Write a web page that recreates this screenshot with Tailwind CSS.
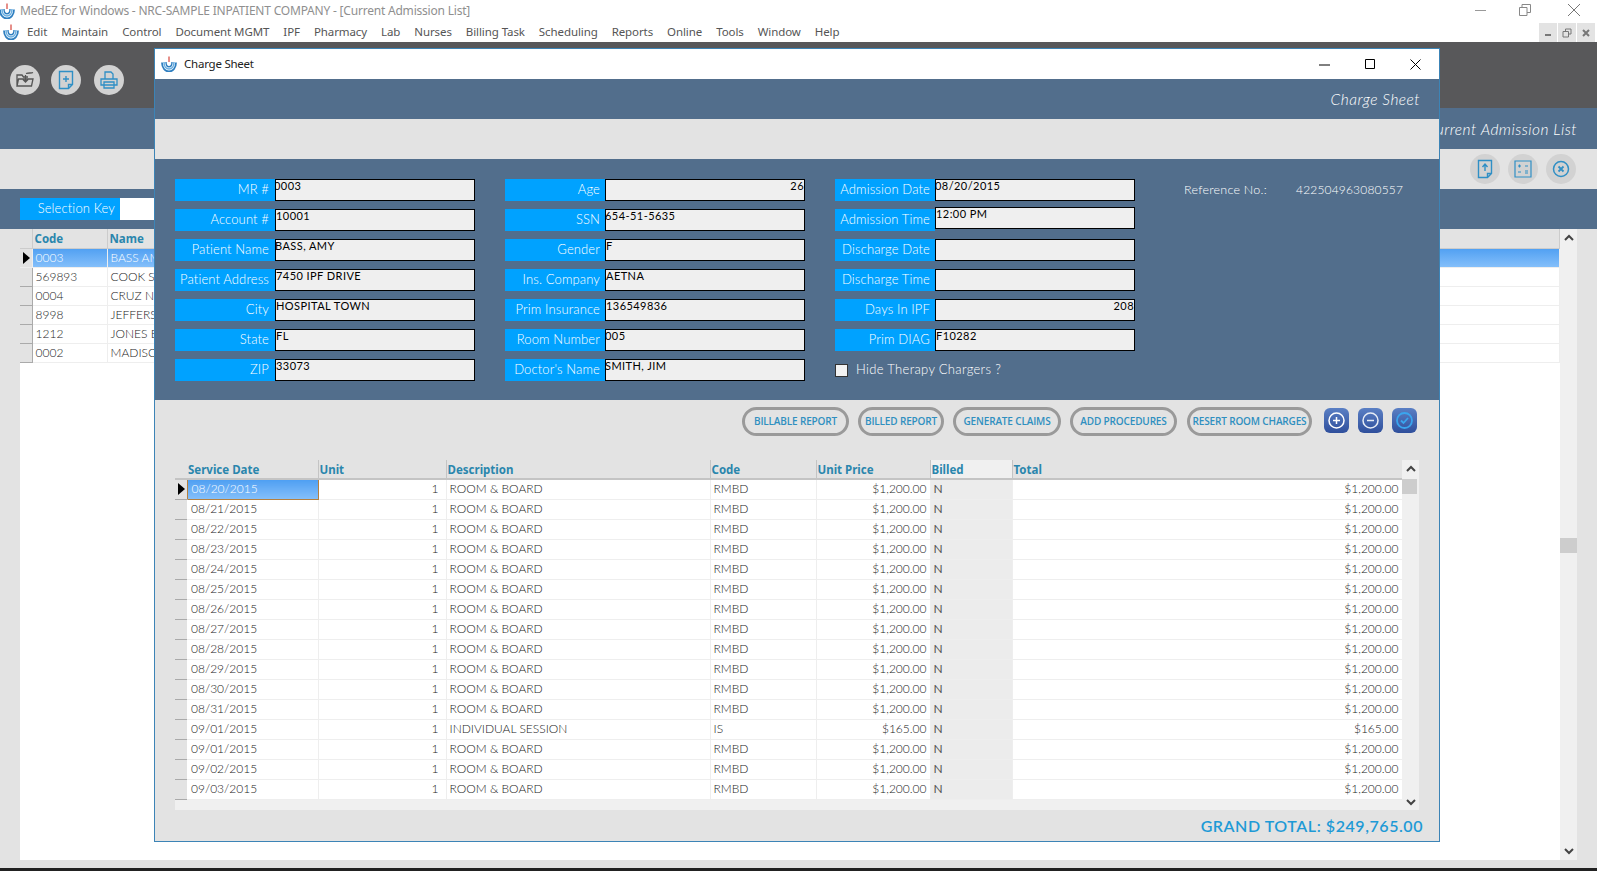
<!DOCTYPE html>
<html>
<head>
<meta charset="utf-8">
<script src="https://cdn.jsdelivr.net/npm/@tailwindcss/browser@4"></script>
<title>MedEZ Charge Sheet</title>
</head>
<body class="m-0 overflow-hidden">
<svg width="0" height="0" class="absolute">
  <defs>
    <symbol id="logo" viewBox="0 0 16 16">
      <path d="M1 6.500C1 12 4 15.500 8 15.500s7-3.500 7-9" fill="none" stroke="#2f7fc0" stroke-width="1.800"/>
      <path d="M3 6C3 10.500 5.300 13 8 13s5-2.500 5-7" fill="none" stroke="#6bb0e2" stroke-width="1.600"/>
      <path d="M5 6C5 9 6.300 10.800 8 10.800S11 9 11 6" fill="none" stroke="#2f7fc0" stroke-width="1.400"/>
      <path d="M8 .5v5.500" fill="none" stroke="#d9534a" stroke-width="1.300"/>
    </symbol>
    <symbol id="rowarrow" viewBox="0 0 7 12"><path d="M0 0l7 6-7 6z" fill="#000"/></symbol>
  </defs>
</svg>
<div class="relative w-[1597px] h-[871px] overflow-hidden bg-[#e3e3e3] font-['Lato',sans-serif] flex flex-col">
  <!-- window title bar -->
  <div class="h-[21px] bg-white flex items-center shrink-0 relative">
    <svg class="w-[16px] h-[16px] ml-[-1px] mr-[5px]"><use href="#logo"/></svg>
    <span class="font-['Noto_Sans',sans-serif] text-[12px] text-[#8f8f8f] tracking-[-0.017em] whitespace-nowrap">MedEZ for Windows - NRC-SAMPLE INPATIENT COMPANY - [Current Admission List]</span>
    <div class="ml-auto flex items-center mr-[16px] -mt-[2px] gap-[32px] text-[#8a8a8a]">
      <svg width="12" height="12" viewBox="0 0 12 12"><path d="M0 6.500h11" stroke="#999" fill="none"/></svg>
      <svg width="12" height="12" viewBox="0 0 12 12"><path d="M.5 3.500h7.500v8H.5zM3 3.500V.5h8.500v8H8" stroke="#888" fill="none"/></svg>
      <svg class="ml-[4px]" width="14" height="14" viewBox="0 0 14 14"><path d="M1 1l12 12M13 1L1 13" stroke="#777" fill="none"/></svg>
    </div>
  </div>
  <!-- menu -->
  <div class="h-[21px] bg-white flex items-center shrink-0 font-['Noto_Sans',sans-serif] text-[11.500px] tracking-[-0.008em] text-[#555] whitespace-nowrap">
    <svg class="w-[16px] h-[16px] ml-[3px] mr-[8px]"><use href="#logo"/></svg>
    <div class="flex gap-[14px]">
      <span>Edit</span><span>Maintain</span><span>Control</span><span>Document MGMT</span><span>IPF</span><span>Pharmacy</span><span>Lab</span><span>Nurses</span><span>Billing Task</span><span>Scheduling</span><span>Reports</span><span>Online</span><span>Tools</span><span>Window</span><span>Help</span>
    </div>
    <div class="ml-auto flex h-[19px] mt-[2px] mr-[2px] gap-[1px]">
      <span class="w-[18px] bg-[#e3e3e3] flex items-center justify-center"><svg width="8" height="8" viewBox="0 0 8 8"><path d="M1 6h6" stroke="#777" stroke-width="2" fill="none"/></svg></span>
      <span class="w-[18px] bg-[#e3e3e3] flex items-center justify-center"><svg width="10" height="10" viewBox="0 0 10 10"><path d="M1 3.500h5.500v5.500H1zM3.500 3.500V1H9v5H6.500" stroke="#777" fill="none"/></svg></span>
      <span class="w-[18px] bg-[#e3e3e3] flex items-center justify-center"><svg width="10" height="10" viewBox="0 0 10 10"><path d="M2 2l6 6M8 2L2 8" stroke="#777" stroke-width="2" fill="none"/></svg></span>
    </div>
  </div>
  <!-- toolbar -->
  <div class="h-[66px] bg-[#58585a] flex items-center shrink-0 pl-[10px] pt-[10px] gap-[11px]">
    <span class="w-[30px] h-[30px] rounded-full bg-[#d2d2d2] flex items-center justify-center">
      <svg width="20" height="18" viewBox="0 0 20 18" fill="none" stroke="#555" stroke-width="1.300"><path d="M2 15V4h5l1.500 2H13M2 15l1.500-7H18l-1.500 7zM11 2.500c3-1 5 0 7-1M10.500 4v7m-2.500-2.500 2.500 2.500 2.500-2.500"/></svg>
    </span>
    <span class="w-[30px] h-[30px] rounded-full bg-[#d2d2d2] flex items-center justify-center">
      <svg width="16" height="20" viewBox="0 0 16 20" fill="none" stroke="#2f8fc5" stroke-width="1.400"><path d="M1.500 1.500h13v13l-4 4h-9zM14.500 14.500h-4v4M8 6v6M5 9h6"/></svg>
    </span>
    <span class="w-[30px] h-[30px] rounded-full bg-[#d2d2d2] flex items-center justify-center ml-[2px]">
      <svg width="20" height="20" viewBox="0 0 20 20" fill="none" stroke="#2f8fc5" stroke-width="1.300"><path d="M6 9V2h6l2 2v5M2 9h16v6H2zM5 12h10v6H5z"/></svg>
    </span>
  </div>
  <!-- header strip -->
  <div class="h-[41px] bg-[#526e8c] shrink-0 flex items-center justify-end pr-[20px] pt-[2px]">
    <span class="text-white text-[15.500px] italic font-light tracking-[0.03em]">Current Admission List</span>
  </div>
  <!-- grey strip -->
  <div class="h-[40px] bg-[#e3e3e3] shrink-0 flex items-center justify-end pr-[21px] gap-[8px]">
    <span class="w-[30px] h-[30px] rounded-full bg-[#d2d2d2] flex items-center justify-center">
      <svg width="16" height="20" viewBox="0 0 16 20" fill="none" stroke="#2f8fc5" stroke-width="1.400"><path d="M1.500 1.500h13v13l-4 4h-9zM14.500 14.500h-4v4M8 12V5M5.500 8 8 5l2.500 3"/></svg>
    </span>
    <span class="w-[30px] h-[30px] rounded-full bg-[#d2d2d2] flex items-center justify-center">
      <svg width="18" height="18" viewBox="0 0 18 18" fill="none" stroke="#2f8fc5" stroke-width="1.200"><path d="M1 1h16v16H1zM4 6h3M5.500 4.500v3M11 6h3M4 12h3M11 11h3M11 13h3"/></svg>
    </span>
    <span class="w-[30px] h-[30px] rounded-full bg-[#d2d2d2] flex items-center justify-center">
      <svg width="18" height="18" viewBox="0 0 18 18" fill="none" stroke="#2f8fc5" stroke-width="1.500"><circle cx="9" cy="9" r="7.500"/><path d="M6.500 6.500l5 5M11.500 6.500l-5 5" stroke-width="1.800"/></svg>
    </span>
  </div>
  <!-- selection key -->
  <div class="h-[40px] bg-[#526e8c] shrink-0 flex items-center pl-[20px]">
    <span class="w-[100px] h-[22px] bg-[#00a2ff] text-white text-[13px] font-light flex items-center justify-end pr-[5px] tracking-[0.01em]">Selection Key</span>
    <span class="w-[300px] h-[22px] bg-white"></span>
  </div>
  <!-- admission list -->
  <div class="h-[631px] shrink-0 flex pl-[20px]">
    <div class="w-[1540px] bg-white">
      <table class="table-fixed w-[1540px] border-collapse text-[12px] font-light text-[#222] [&_td]:h-[19px] [&_td]:p-0 [&_td]:pl-[3px] [&_td]:border-b [&_td]:border-r [&_td]:border-[#eeeeee]">
        <colgroup><col class="w-[12px]"><col class="w-[75px]"><col class="w-[200px]"><col></colgroup>
        <tbody>
          <tr class="bg-[#e3e3e3] text-[#2a86ad] font-['Noto_Sans',sans-serif] font-bold text-[11.500px]">
            <td class="!border-[#cccccc]"></td><td class="!border-[#cccccc] !pl-[2px]">Code</td><td class="!border-[#cccccc] !pl-[2px]">Name</td><td class="!border-[#cccccc]"></td>
          </tr>
          <tr class="text-white bg-[linear-gradient(#4f9ff2,#84bffa)]"><td class="!pl-0 bg-[#e3e3e3]"><svg class="w-[7px] h-[12px] ml-[3px]"><use href="#rowarrow"/></svg></td><td>0003</td><td>BASS AMY</td><td></td></tr>
          <tr><td class="bg-[#e3e3e3] !border-[#aaaaaa]"></td><td>569893</td><td>COOK S</td><td></td></tr>
          <tr><td class="bg-[#e3e3e3] !border-[#aaaaaa]"></td><td>0004</td><td>CRUZ N</td><td></td></tr>
          <tr><td class="bg-[#e3e3e3] !border-[#aaaaaa]"></td><td>8998</td><td>JEFFERS</td><td></td></tr>
          <tr><td class="bg-[#e3e3e3] !border-[#aaaaaa]"></td><td>1212</td><td>JONES E</td><td></td></tr>
          <tr><td class="bg-[#e3e3e3] !border-[#aaaaaa]"></td><td>0002</td><td>MADISC</td><td></td></tr>
        </tbody>
      </table>
    </div>
    <div class="w-[17px] bg-[#f0f0f0] flex flex-col items-center justify-between py-[5px] relative">
      <svg width="10" height="8" viewBox="0 0 10 8"><path d="M1 6l4-4 4 4" fill="none" stroke="#444" stroke-width="2"/></svg>
      <span class="absolute top-[309px] left-0 w-[17px] h-[15px] bg-[#cdcdcd]"></span>
      <svg width="10" height="8" viewBox="0 0 10 8"><path d="M1 2l4 4 4-4" fill="none" stroke="#444" stroke-width="2"/></svg>
    </div>
  </div>
  <div class="h-[8px] bg-[#e3e3e3] shrink-0"></div>
  <div class="flex-1 bg-[#222222]"></div>

  <!-- Charge Sheet dialog -->
  <div class="absolute left-[154px] top-[48px] w-[1286px] h-[794px] border border-[#3c84b6] flex flex-col bg-[#e3e3e3]">
    <div class="h-[30px] bg-white flex items-center shrink-0 font-['Noto_Sans',sans-serif] text-[11.500px] tracking-[-0.02em] text-[#222]">
      <svg class="w-[16px] h-[16px] ml-[6px] mr-[7px]"><use href="#logo"/></svg>
      <span>Charge Sheet</span>
      <div class="ml-auto flex items-center gap-[35px] mr-[18px]">
        <svg width="11" height="11" viewBox="0 0 11 11"><path d="M0 6h11" stroke="#000" fill="none"/></svg>
        <svg width="10" height="10" viewBox="0 0 10 10"><path d="M.5.5h9v9h-9z" stroke="#000" fill="none"/></svg>
        <svg width="11" height="11" viewBox="0 0 11 11"><path d="M.5.5l10 10M10.500.5l-10 10" stroke="#000" fill="none"/></svg>
      </div>
    </div>
    <div class="h-[40px] bg-[#526e8c] shrink-0 flex items-center justify-end pr-[19px] pt-[2px]">
      <span class="text-white text-[15.500px] italic font-light tracking-[0.03em]">Charge Sheet</span>
    </div>
    <div class="h-[40px] bg-[#e3e3e3] shrink-0"></div>
    <!-- form -->
    <div class="h-[241px] bg-[#526e8c] shrink-0 flex pt-[20px] pl-[20px] gap-[30px] text-[11px] tracking-[0.04em] text-black">
      <div class="w-[300px] flex flex-col gap-[8px]">
        <div class="flex h-[22px]"><span class="w-[100px] bg-[#00a2ff] text-white text-[13px] font-light flex items-center justify-end pr-[6px] tracking-[0.01em]">MR #</span><span class="w-[200px] bg-[#efefef] border border-black leading-[12px] overflow-hidden whitespace-nowrap -indent-[2px]">0003</span></div>
        <div class="flex h-[22px]"><span class="w-[100px] bg-[#00a2ff] text-white text-[13px] font-light flex items-center justify-end pr-[6px] tracking-[0.01em]">Account #</span><span class="w-[200px] bg-[#efefef] border border-black leading-[12px] overflow-hidden whitespace-nowrap">10001</span></div>
        <div class="flex h-[22px]"><span class="w-[100px] bg-[#00a2ff] text-white text-[13px] font-light flex items-center justify-end pr-[6px] tracking-[0.01em]">Patient Name</span><span class="w-[200px] bg-[#efefef] border border-black leading-[12px] overflow-hidden whitespace-nowrap -indent-[1px]">BASS, AMY</span></div>
        <div class="flex h-[22px]"><span class="w-[100px] bg-[#00a2ff] text-white text-[13px] font-light flex items-center justify-end pr-[6px] tracking-[0.01em]">Patient Address</span><span class="w-[200px] bg-[#efefef] border border-black leading-[12px] overflow-hidden whitespace-nowrap">7450 IPF DRIVE</span></div>
        <div class="flex h-[22px]"><span class="w-[100px] bg-[#00a2ff] text-white text-[13px] font-light flex items-center justify-end pr-[6px] tracking-[0.01em]">City</span><span class="w-[200px] bg-[#efefef] border border-black leading-[12px] overflow-hidden whitespace-nowrap">HOSPITAL TOWN</span></div>
        <div class="flex h-[22px]"><span class="w-[100px] bg-[#00a2ff] text-white text-[13px] font-light flex items-center justify-end pr-[6px] tracking-[0.01em]">State</span><span class="w-[200px] bg-[#efefef] border border-black leading-[12px] overflow-hidden whitespace-nowrap">FL</span></div>
        <div class="flex h-[22px]"><span class="w-[100px] bg-[#00a2ff] text-white text-[13px] font-light flex items-center justify-end pr-[6px] tracking-[0.01em]">ZIP</span><span class="w-[200px] bg-[#efefef] border border-black leading-[12px] overflow-hidden whitespace-nowrap">33073</span></div>
      </div>
      <div class="w-[300px] flex flex-col gap-[8px]">
        <div class="flex h-[22px]"><span class="w-[100px] bg-[#00a2ff] text-white text-[13px] font-light flex items-center justify-end pr-[5px] tracking-[0.01em]">Age</span><span class="w-[200px] bg-[#efefef] border border-black leading-[12px] overflow-hidden whitespace-nowrap text-right">26</span></div>
        <div class="flex h-[22px]"><span class="w-[100px] bg-[#00a2ff] text-white text-[13px] font-light flex items-center justify-end pr-[5px] tracking-[0.01em]">SSN</span><span class="w-[200px] bg-[#efefef] border border-black leading-[12px] overflow-hidden whitespace-nowrap -indent-[1px]">654-51-5635</span></div>
        <div class="flex h-[22px]"><span class="w-[100px] bg-[#00a2ff] text-white text-[13px] font-light flex items-center justify-end pr-[5px] tracking-[0.01em]">Gender</span><span class="w-[200px] bg-[#efefef] border border-black leading-[12px] overflow-hidden whitespace-nowrap">F</span></div>
        <div class="flex h-[22px]"><span class="w-[100px] bg-[#00a2ff] text-white text-[13px] font-light flex items-center justify-end pr-[5px] tracking-[0.01em]">Ins. Company</span><span class="w-[200px] bg-[#efefef] border border-black leading-[12px] overflow-hidden whitespace-nowrap">AETNA</span></div>
        <div class="flex h-[22px]"><span class="w-[100px] bg-[#00a2ff] text-white text-[13px] font-light flex items-center justify-end pr-[5px] tracking-[0.01em]">Prim Insurance</span><span class="w-[200px] bg-[#efefef] border border-black leading-[12px] overflow-hidden whitespace-nowrap">136549836</span></div>
        <div class="flex h-[22px]"><span class="w-[100px] bg-[#00a2ff] text-white text-[13px] font-light flex items-center justify-end pr-[5px] tracking-[0.01em]">Room Number</span><span class="w-[200px] bg-[#efefef] border border-black leading-[12px] overflow-hidden whitespace-nowrap -indent-[1px]">005</span></div>
        <div class="flex h-[22px]"><span class="w-[100px] bg-[#00a2ff] text-white text-[13px] font-light flex items-center justify-end pr-[5px] tracking-[0.01em]">Doctor's Name</span><span class="w-[200px] bg-[#efefef] border border-black leading-[12px] overflow-hidden whitespace-nowrap -indent-[1px]">SMITH, JIM</span></div>
      </div>
      <div class="w-[300px] flex flex-col gap-[8px]">
        <div class="flex h-[22px]"><span class="w-[100px] bg-[#00a2ff] text-white text-[13px] font-light flex items-center justify-end pr-[5px] tracking-[0.01em] whitespace-nowrap">Admission Date</span><span class="w-[200px] bg-[#efefef] border border-black leading-[12px] overflow-hidden whitespace-nowrap -indent-[1px]">08/20/2015</span></div>
        <div class="flex h-[22px]"><span class="w-[100px] bg-[#00a2ff] text-white text-[13px] font-light flex items-center justify-end pr-[5px] tracking-[0.01em] whitespace-nowrap">Admission Time</span><span class="w-[200px] h-[22px] -mt-[2px] bg-[#efefef] border border-black leading-[12px] overflow-hidden whitespace-nowrap">12:00 PM</span></div>
        <div class="flex h-[22px]"><span class="w-[100px] bg-[#00a2ff] text-white text-[13px] font-light flex items-center justify-end pr-[5px] tracking-[0.01em] whitespace-nowrap">Discharge Date</span><span class="w-[200px] bg-[#efefef] border border-black"></span></div>
        <div class="flex h-[22px]"><span class="w-[100px] bg-[#00a2ff] text-white text-[13px] font-light flex items-center justify-end pr-[5px] tracking-[0.01em] whitespace-nowrap">Discharge Time</span><span class="w-[200px] bg-[#efefef] border border-black"></span></div>
        <div class="flex h-[22px]"><span class="w-[100px] bg-[#00a2ff] text-white text-[13px] font-light flex items-center justify-end pr-[5px] tracking-[0.01em] whitespace-nowrap">Days In IPF</span><span class="w-[200px] bg-[#efefef] border border-black leading-[12px] overflow-hidden whitespace-nowrap text-right">208</span></div>
        <div class="flex h-[22px]"><span class="w-[100px] bg-[#00a2ff] text-white text-[13px] font-light flex items-center justify-end pr-[5px] tracking-[0.01em] whitespace-nowrap">Prim DIAG</span><span class="w-[200px] bg-[#efefef] border border-black leading-[12px] overflow-hidden whitespace-nowrap">F10282</span></div>
        <div class="flex h-[22px] items-center text-white text-[13px] font-light tracking-[0.025em]"><span class="w-[13px] h-[13px] bg-[#f2f2f2] border border-[#333] mr-[8px]"></span>Hide Therapy Chargers ?</div>
      </div>
      <div class="flex text-white text-[12.500px] h-[22px] items-center ml-[19px] whitespace-nowrap font-light">
        <span class="w-[112px] tracking-[0.02em]">Reference No.:</span><span class="text-[12px] tracking-[0.015em]">422504963080557</span>
      </div>
    </div>
    <!-- actions -->
    <div class="h-[60px] shrink-0 flex items-start pt-[7px] pl-[587px] font-['Open_Sans',sans-serif] font-semibold text-[10px] tracking-[-0.015em] text-[#2f8fc0] whitespace-nowrap">
      <span class="w-[107px] h-[29px] rounded-full border-[3px] border-[#9a9a9a] flex items-center justify-center">BILLABLE REPORT</span>
      <span class="w-[86px] h-[29px] ml-[9px] rounded-full border-[3px] border-[#9a9a9a] flex items-center justify-center">BILLED REPORT</span>
      <span class="w-[108px] h-[29px] ml-[9px] rounded-full border-[3px] border-[#9a9a9a] flex items-center justify-center">GENERATE CLAIMS</span>
      <span class="w-[107px] h-[29px] ml-[9px] rounded-full border-[3px] border-[#9a9a9a] flex items-center justify-center">ADD PROCEDURES</span>
      <span class="w-[125px] h-[29px] ml-[10px] rounded-full border-[3px] border-[#9a9a9a] flex items-center justify-center">RESERT ROOM CHARGES</span>
      <span class="w-[25px] h-[25px] ml-[12px] mt-[1px] rounded-[6px] bg-[linear-gradient(#5a7fc4,#2f4f9c)] flex items-center justify-center">
        <svg width="19" height="19" viewBox="0 0 19 19" fill="none" stroke="#fff" stroke-width="1.500"><circle cx="9.500" cy="9.500" r="7.500"/><path d="M9.500 6v7M6 9.500h7"/></svg>
      </span>
      <span class="w-[25px] h-[25px] ml-[9px] mt-[1px] rounded-[6px] bg-[linear-gradient(#5a7fc4,#2f4f9c)] flex items-center justify-center">
        <svg width="19" height="19" viewBox="0 0 19 19" fill="none" stroke="#e6ecf5" stroke-width="1.500"><circle cx="9.500" cy="9.500" r="7.500"/><path d="M6 9.500h7"/></svg>
      </span>
      <span class="w-[25px] h-[25px] ml-[9px] mt-[1px] rounded-[6px] bg-[linear-gradient(#5a7fc4,#2f4f9c)] flex items-center justify-center">
        <svg width="19" height="19" viewBox="0 0 19 19" fill="none" stroke="#3aa5ee" stroke-width="1.800"><circle cx="9.500" cy="9.500" r="7.500"/><path d="M6 9.500l2.500 2.500 4.500-5"/></svg>
      </span>
    </div>
    <!-- table -->
    <div class="h-[350px] shrink-0 flex ml-[20px] w-[1244px]">
      <div class="w-[1227px] flex flex-col bg-[#f0f0f0]">
        <table class="table-fixed w-[1227px] border-collapse text-[12px] font-light text-[#222] [&_td]:h-[20px] [&_td]:p-0 [&_td]:border-b [&_td]:border-r [&_td]:border-[#eeeeee] [&_td]:bg-white">
          <colgroup><col class="w-[12px]"><col class="w-[131px]"><col class="w-[128px]"><col class="w-[264px]"><col class="w-[106px]"><col class="w-[114px]"><col class="w-[82px]"><col class="w-[390px]"></colgroup>
          <thead class="font-['Noto_Sans',sans-serif] text-[11.500px] leading-[14px] text-[#2a86ad] bg-[#e3e3e3] [&_th]:h-[19px] [&_th]:p-0 [&_th]:pl-[1px] [&_th]:pt-[1px] [&_th]:text-left [&_th]:font-bold [&_th]:border-b-2 [&_th]:border-r [&_th]:border-[#c4c4c4]">
            <tr><th class="!border-r-0"></th><th>Service Date</th><th>Unit</th><th>Description</th><th>Code</th><th>Unit Price</th><th class="bg-[#f0f0f0]">Billed</th><th>Total</th></tr>
          </thead>
          <tbody class="[&_td:nth-child(1)]:!bg-[#e3e3e3] [&_td:nth-child(1)]:!border-[#aaaaaa] [&_td:nth-child(1)]:!border-r-0 [&_td:nth-child(2)]:pl-[4px] [&_td:nth-child(3)]:text-right [&_td:nth-child(3)]:pr-[7px] [&_td:nth-child(4)]:pl-[3px] [&_td:nth-child(5)]:pl-[3px] [&_td:nth-child(6)]:text-right [&_td:nth-child(6)]:pr-[3px] [&_td:nth-child(7)]:pl-[3px] [&_td:nth-child(7)]:!bg-[#ececec] [&_td:nth-child(7)]:font-normal [&_td:nth-child(7)]:text-[#555] [&_td:nth-child(8)]:text-right [&_td:nth-child(8)]:pr-[3px]">
            <tr><td><svg class="w-[7px] h-[12px] ml-[3px]"><use href="#rowarrow"/></svg></td><td class="!bg-[linear-gradient(#4f9ff2,#84bffa)] !border !border-[#b5803f] text-white">08/20/2015</td><td>1</td><td>ROOM &amp; BOARD</td><td>RMBD</td><td>$1,200.00</td><td>N</td><td>$1,200.00</td></tr>
            <tr><td></td><td>08/21/2015</td><td>1</td><td>ROOM &amp; BOARD</td><td>RMBD</td><td>$1,200.00</td><td>N</td><td>$1,200.00</td></tr>
            <tr><td></td><td>08/22/2015</td><td>1</td><td>ROOM &amp; BOARD</td><td>RMBD</td><td>$1,200.00</td><td>N</td><td>$1,200.00</td></tr>
            <tr><td></td><td>08/23/2015</td><td>1</td><td>ROOM &amp; BOARD</td><td>RMBD</td><td>$1,200.00</td><td>N</td><td>$1,200.00</td></tr>
            <tr><td></td><td>08/24/2015</td><td>1</td><td>ROOM &amp; BOARD</td><td>RMBD</td><td>$1,200.00</td><td>N</td><td>$1,200.00</td></tr>
            <tr><td></td><td>08/25/2015</td><td>1</td><td>ROOM &amp; BOARD</td><td>RMBD</td><td>$1,200.00</td><td>N</td><td>$1,200.00</td></tr>
            <tr><td></td><td>08/26/2015</td><td>1</td><td>ROOM &amp; BOARD</td><td>RMBD</td><td>$1,200.00</td><td>N</td><td>$1,200.00</td></tr>
            <tr><td></td><td>08/27/2015</td><td>1</td><td>ROOM &amp; BOARD</td><td>RMBD</td><td>$1,200.00</td><td>N</td><td>$1,200.00</td></tr>
            <tr><td></td><td>08/28/2015</td><td>1</td><td>ROOM &amp; BOARD</td><td>RMBD</td><td>$1,200.00</td><td>N</td><td>$1,200.00</td></tr>
            <tr><td></td><td>08/29/2015</td><td>1</td><td>ROOM &amp; BOARD</td><td>RMBD</td><td>$1,200.00</td><td>N</td><td>$1,200.00</td></tr>
            <tr><td></td><td>08/30/2015</td><td>1</td><td>ROOM &amp; BOARD</td><td>RMBD</td><td>$1,200.00</td><td>N</td><td>$1,200.00</td></tr>
            <tr><td></td><td>08/31/2015</td><td>1</td><td>ROOM &amp; BOARD</td><td>RMBD</td><td>$1,200.00</td><td>N</td><td>$1,200.00</td></tr>
            <tr><td></td><td>09/01/2015</td><td>1</td><td>INDIVIDUAL SESSION</td><td>IS</td><td>$165.00</td><td>N</td><td>$165.00</td></tr>
            <tr><td></td><td>09/01/2015</td><td>1</td><td>ROOM &amp; BOARD</td><td>RMBD</td><td>$1,200.00</td><td>N</td><td>$1,200.00</td></tr>
            <tr><td></td><td>09/02/2015</td><td>1</td><td>ROOM &amp; BOARD</td><td>RMBD</td><td>$1,200.00</td><td>N</td><td>$1,200.00</td></tr>
            <tr><td></td><td>09/03/2015</td><td>1</td><td>ROOM &amp; BOARD</td><td>RMBD</td><td>$1,200.00</td><td>N</td><td>$1,200.00</td></tr>
          </tbody>
        </table>
      </div>
      <div class="w-[17px] bg-[#f0f0f0] flex flex-col items-center justify-between pt-[5px] pb-[4px] relative">
        <svg width="10" height="8" viewBox="0 0 10 8"><path d="M1 6l4-4 4 4" fill="none" stroke="#444" stroke-width="2"/></svg>
        <span class="absolute top-[19px] left-0 w-[15px] h-[15px] bg-[#cdcdcd]"></span>
        <svg width="10" height="8" viewBox="0 0 10 8"><path d="M1 2l4 4 4-4" fill="none" stroke="#444" stroke-width="2"/></svg>
      </div>
    </div>
    <!-- total -->
    <div class="flex-1 flex items-center justify-end pr-[16px] text-[16px] font-semibold tracking-[0.035em] text-[#1e9ad6]">GRAND TOTAL: $249,765.00</div>
  </div>
</div>
</body>
</html>
